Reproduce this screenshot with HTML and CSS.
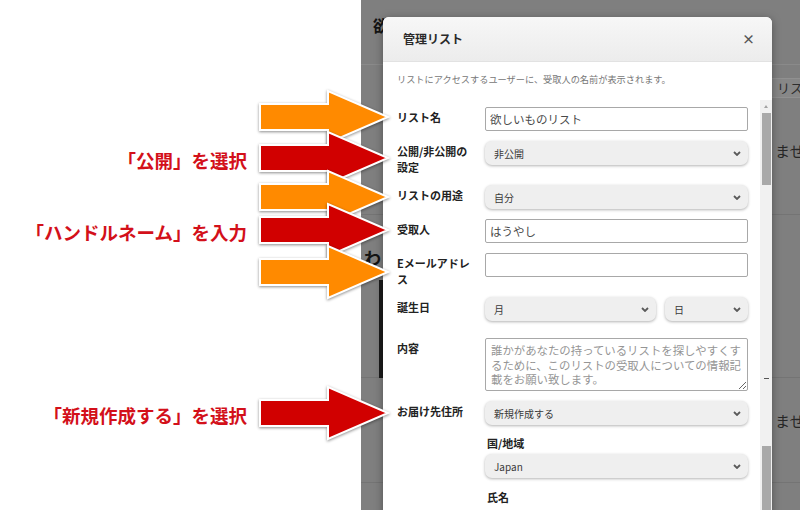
FILE: index.html
```html
<!DOCTYPE html>
<html lang="ja">
<head>
    <meta charset="UTF-8">
    <meta name="viewport" content="width=device-width, initial-scale=1.0">
    <title>管理リスト</title>
    <link rel="stylesheet" href="styles.css">
</head>
<body>
    <div class="stage">
        <div class="notes"></div>

        <!-- dimmed page behind the dialog -->
        <div class="page">
            <div class="pg-top">
                <div class="pg-title">欲しいものリスト</div>
                <div class="pg-avatar"></div>
            </div>
            <div class="pg-tools">
                <span class="pg-btn">リストを作成</span>
            </div>
            <div class="pg-item pg-item-1">
                <span class="pg-note">ません</span>
            </div>
            <div class="pg-item pg-item-2">
                <div class="pg-head">わ</div>
                <div class="pg-photo"></div>
            </div>
            <div class="pg-item pg-item-3">
                <span class="pg-note">ません</span>
            </div>
        </div>

        <div class="modal">
            <div class="modal-head">
                <span class="modal-title">管理リスト</span>
                <span class="modal-close">×</span>
            </div>
            <div class="modal-desc">リストにアクセスするユーザーに、受取人の名前が表示されます。</div>
            <div class="modal-main">
                <div class="form">
                    <div class="row">
                        <div class="row-label">リスト名</div>
                        <div class="row-field">
                            <input class="input" type="text" value="欲しいものリスト">
                        </div>
                    </div>
                    <div class="row">
                        <div class="row-label">公開/非公開の設定</div>
                        <div class="row-field">
                            <div class="select-wrap">
                                <select class="select"><option>非公開</option></select>
                                <svg class="chev" width="8" height="5" viewBox="0 0 8 5"><path d="M1 1 L4 4 L7 1"/></svg>
                            </div>
                        </div>
                    </div>
                    <div class="row">
                        <div class="row-label">リストの用途</div>
                        <div class="row-field">
                            <div class="select-wrap">
                                <select class="select"><option>自分</option></select>
                                <svg class="chev" width="8" height="5" viewBox="0 0 8 5"><path d="M1 1 L4 4 L7 1"/></svg>
                            </div>
                        </div>
                    </div>
                    <div class="row">
                        <div class="row-label">受取人</div>
                        <div class="row-field">
                            <input class="input" type="text" value="はうやし">
                        </div>
                    </div>
                    <div class="row">
                        <div class="row-label">Eメールアドレス</div>
                        <div class="row-field">
                            <input class="input" type="email" value="">
                        </div>
                    </div>
                    <div class="row row-birthday">
                        <div class="row-label">誕生日</div>
                        <div class="row-field birthday">
                            <div class="select-wrap month">
                                <select class="select"><option>月</option></select>
                                <svg class="chev" width="8" height="5" viewBox="0 0 8 5"><path d="M1 1 L4 4 L7 1"/></svg>
                            </div>
                            <div class="select-wrap day">
                                <select class="select"><option>日</option></select>
                                <svg class="chev" width="8" height="5" viewBox="0 0 8 5"><path d="M1 1 L4 4 L7 1"/></svg>
                            </div>
                        </div>
                    </div>
                    <div class="row">
                        <div class="row-label">内容</div>
                        <div class="row-field">
                            <textarea class="textarea" placeholder="誰かがあなたの持っているリストを探しやすくするために、このリストの受取人についての情報記載をお願い致します。"></textarea>
                        </div>
                    </div>
                    <div class="row">
                        <div class="row-label">お届け先住所</div>
                        <div class="row-field">
                            <div class="select-wrap">
                                <select class="select"><option>新規作成する</option></select>
                                <svg class="chev" width="8" height="5" viewBox="0 0 8 5"><path d="M1 1 L4 4 L7 1"/></svg>
                            </div>
                        </div>
                    </div>
                    <div class="sub">
                        <div class="sub-label">国/地域</div>
                        <div class="select-wrap">
                            <select class="select"><option>Japan</option></select>
                            <svg class="chev" width="8" height="5" viewBox="0 0 8 5"><path d="M1 1 L4 4 L7 1"/></svg>
                        </div>
                        <div class="sub-label sub-label-name">氏名</div>
                    </div>
                </div>
                <div class="scrollbar">
                    <div class="sb-arrow"></div>
                    <div class="sb-thumb"></div>
                    <div class="sb-dash"></div>
                    <div class="sb-thumb sb-thumb-low"></div>
                </div>
            </div>
        </div>

        <!-- annotation arrows -->
        <div class="callout" style="top: 89px;">
            <svg class="arrow arrow-orange" width="134" height="56" viewBox="0 0 134 56"><path d="M4 15 H72 V2 L132 28 L72 54 V41 H4 Z"/></svg>
        </div>
        <div class="callout" style="top: 130px;">
            <span class="callout-text">「公開」を選択</span>
            <svg class="arrow arrow-red" width="134" height="56" viewBox="0 0 134 56"><path d="M4 15 H72 V2 L132 28 L72 54 V41 H4 Z"/></svg>
        </div>
        <div class="callout" style="top: 169px;">
            <svg class="arrow arrow-orange" width="134" height="56" viewBox="0 0 134 56"><path d="M4 15 H72 V2 L132 28 L72 54 V41 H4 Z"/></svg>
        </div>
        <div class="callout" style="top: 202px;">
            <span class="callout-text">「ハンドルネーム」を入力</span>
            <svg class="arrow arrow-red" width="134" height="56" viewBox="0 0 134 56"><path d="M4 15 H72 V2 L132 28 L72 54 V41 H4 Z"/></svg>
        </div>
        <div class="callout" style="top: 244px;">
            <svg class="arrow arrow-orange" width="134" height="56" viewBox="0 0 134 56"><path d="M4 15 H72 V2 L132 28 L72 54 V41 H4 Z"/></svg>
        </div>
        <div class="callout" style="top: 385px;">
            <span class="callout-text">「新規作成する」を選択</span>
            <svg class="arrow arrow-red" width="134" height="56" viewBox="0 0 134 56"><path d="M4 15 H72 V2 L132 28 L72 54 V41 H4 Z"/></svg>
        </div>
    </div>
</body>
</html>
```

FILE: styles.css
```css
body {
    margin: 0;
    font-family: "Noto Sans CJK JP", "Noto Sans", sans-serif;
    color: #222;
}

.stage {
    position: relative;
    width: 800px;
    height: 510px;
    display: flex;
    overflow: hidden;
    background: #fff;
}

.notes {
    width: 361px;
    flex: none;
}

/* Dimmed page */
.page {
    flex: 1;
    min-width: 0;
    background: #7f7f7f;
    display: flex;
    flex-direction: column;
    overflow: hidden;
}

.pg-top {
    height: 65px;
    box-sizing: border-box;
    padding: 15px 0 0 12px;
    border-bottom: 1px solid #8a8a8a;
}

.pg-title {
    font-size: 16px;
    font-weight: 700;
    line-height: 20px;
    color: #141414;
}

.pg-avatar {
    width: 15px;
    height: 15px;
    margin: 3px 0 0 15px;
    border-radius: 50%;
    background: #5e5e5e;
}

.pg-tools {
    height: 35px;
    box-sizing: border-box;
    padding: 9px 0 0 409px;
    white-space: nowrap;
}

.pg-btn {
    display: inline-block;
    height: 18px;
    line-height: 18px;
    padding: 0 6px;
    border: 1px solid #909090;
    background: #878787;
    font-size: 13px;
    color: #2e2e2e;
}

.pg-item {
    border-bottom: 1px solid #747474;
    box-sizing: border-box;
    white-space: nowrap;
}

.pg-item-1 {
    height: 115px;
    padding: 38px 0 0 414px;
}

.pg-item-2 {
    height: 163px;
    padding: 33px 0 0 3px;
}

.pg-item-3 {
    height: 105px;
    padding: 30px 0 0 414px;
}

.pg-note {
    font-size: 15px;
    color: #262626;
}

.pg-head {
    font-size: 17px;
    font-weight: 700;
    line-height: 20px;
    color: #141414;
}

.pg-photo {
    width: 80px;
    height: 98px;
    margin: 12px 0 0 15px;
    background: #1b1b1b;
}

/* Dialog */
.modal {
    position: absolute;
    left: 383px;
    top: 17px;
    width: 389px;
    height: 520px;
    background: #fff;
    border-radius: 6px 6px 0 0;
    box-shadow: 0 2px 10px rgba(0, 0, 0, 0.35);
    display: flex;
    flex-direction: column;
    overflow: hidden;
}

.modal-head {
    height: 45px;
    box-sizing: border-box;
    padding: 0 17px 2px 20px;
    display: flex;
    align-items: center;
    justify-content: space-between;
    background: linear-gradient(#f7f7f7, #ececec);
    border-bottom: 1px solid #e2e2e2;
}

.modal-title {
    font-size: 12px;
    font-weight: 700;
    color: #2a2a2a;
}

.modal-close {
    font-size: 13px;
    font-weight: 700;
    color: #555;
}

.modal-desc {
    height: 38px;
    box-sizing: border-box;
    padding: 0 0 4px 14px;
    display: flex;
    align-items: center;
    font-size: 9.2px;
    color: #777;
}

.modal-main {
    flex: 1;
    display: flex;
    min-height: 0;
}

.form {
    flex: 1;
    padding: 7px 12px 0 14px;
}

.row {
    display: flex;
    margin-bottom: 10px;
}

.row-birthday {
    margin-bottom: 17px;
}

.row-label {
    width: 88px;
    flex: none;
    box-sizing: border-box;
    padding: 2px 10px 0 0;
    font-size: 11px;
    font-weight: 700;
    line-height: 16px;
    color: #222;
}

.row-field {
    flex: 1;
    min-width: 0;
}

.input,
.textarea {
    display: block;
    width: 100%;
    box-sizing: border-box;
    margin: 0;
    border: 1px solid #a8a8a8;
    border-radius: 2px;
    font-family: inherit;
    color: #4a4a4a;
    background: #fff;
    outline: none;
}

.input {
    height: 24px;
    padding: 0 4px;
    font-size: 11.5px;
}

.textarea {
    height: 53px;
    padding: 4px 2px 0 5px;
    font-size: 11.4px;
    line-height: 14.5px;
    resize: vertical;
    overflow: hidden;
}

.textarea::placeholder {
    color: #959595;
}

.select-wrap {
    position: relative;
}

.select {
    display: block;
    width: 100%;
    height: 24px;
    margin: 0;
    padding: 0 24px 0 9px;
    border: 0;
    border-radius: 7px;
    background: #efefef;
    box-shadow: 0 1px 3px rgba(0, 0, 0, 0.3);
    appearance: none;
    -webkit-appearance: none;
    font-family: inherit;
    font-size: 10px;
    color: #3a3a3a;
    outline: none;
}

.chev {
    position: absolute;
    right: 7px;
    top: 10px;
    pointer-events: none;
}

.chev path {
    fill: none;
    stroke: #5a5a5a;
    stroke-width: 1.8;
}

.birthday {
    display: flex;
    gap: 9px;
}

.month {
    flex: 1;
}

.day {
    width: 83px;
    flex: none;
}

.sub {
    margin-left: 88px;
}

.sub-label {
    margin: 1px 0 3px 2px;
    font-size: 11px;
    font-weight: 700;
    line-height: 16px;
    color: #222;
}

.sub-label-name {
    margin-top: 11px;
}

/* Scrollbar drawn inside the dialog */
.scrollbar {
    width: 12px;
    flex: none;
    background: #f1f1f1;
    display: flex;
    flex-direction: column;
    align-items: center;
}

.sb-arrow {
    margin-top: 5px;
    width: 0;
    height: 0;
    border-left: 2.5px solid transparent;
    border-right: 2.5px solid transparent;
    border-bottom: 3px solid #a3a3a3;
}

.sb-thumb {
    width: 9px;
    height: 72px;
    margin-top: 5px;
    background: #a9a9a9;
}

.sb-dash {
    width: 5px;
    height: 1px;
    margin-top: 193px;
    background: #555;
}

.sb-thumb-low {
    flex: 1;
    margin-top: 67px;
}

/* Annotation arrows */
.callout {
    position: absolute;
    left: 0;
    width: 390px;
    height: 56px;
    display: flex;
    align-items: center;
    justify-content: flex-end;
}

.callout-text {
    margin: 3px 9px 0 0;
    font-size: 18.5px;
    font-weight: 700;
    color: #d3101a;
    white-space: nowrap;
}

.arrow {
    flex: none;
    filter: drop-shadow(0 1px 1.5px rgba(0, 0, 0, 0.45));
}

.arrow path {
    stroke: #fff;
    stroke-width: 2;
    stroke-linejoin: miter;
}

.arrow-orange path {
    fill: #ff8a00;
}

.arrow-red path {
    fill: #d10000;
}
```
